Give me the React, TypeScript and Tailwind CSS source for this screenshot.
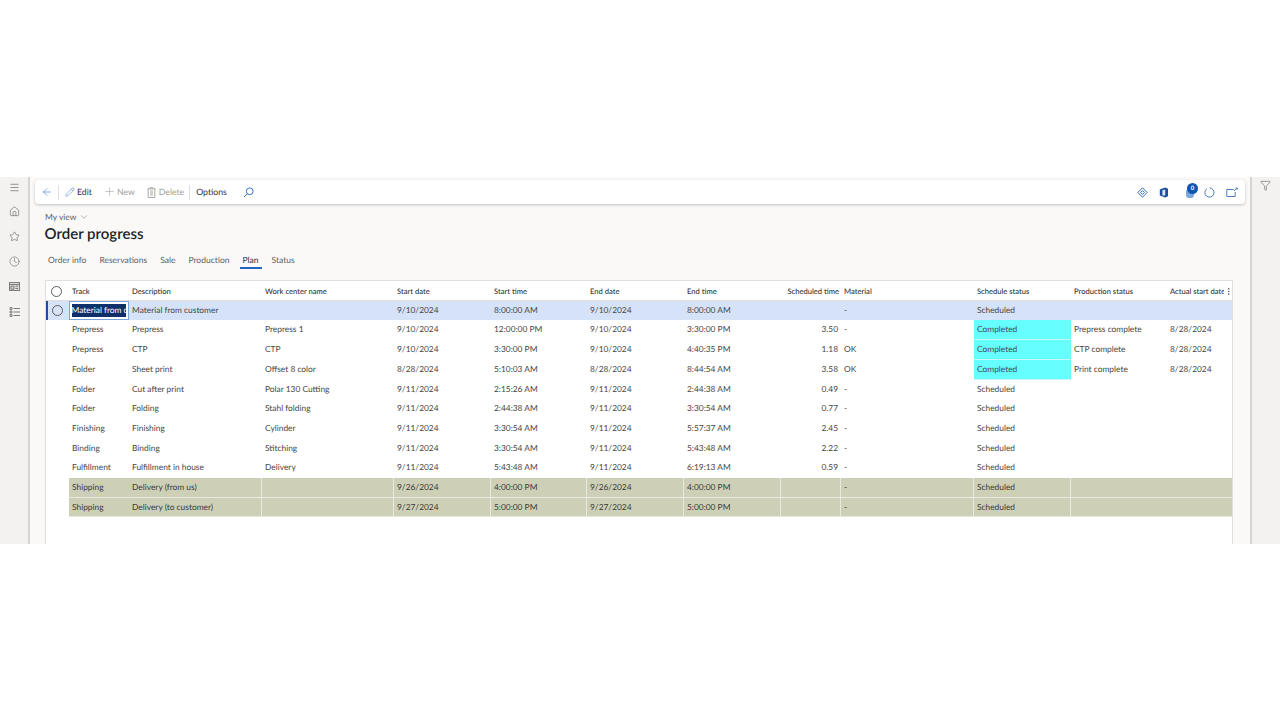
import React from "react";
import { ArrowLeft, Clock, Filter, Home, Menu, Pencil, Plus, Star, EllipsisVertical, ChevronDown } from "lucide-react";

type Row = {
  track: string;
  desc: string;
  center: string;
  startDate: string;
  startTime: string;
  endDate: string;
  endTime: string;
  hours: string;
  material: string;
  status: string;
  production: string;
  actual: string;
};

const rows: Row[] = [
  { track: "Prepress", desc: "Prepress", center: "Prepress 1", startDate: "9/10/2024", startTime: "12:00:00 PM", endDate: "9/10/2024", endTime: "3:30:00 PM", hours: "3.50", material: "-", status: "Completed", production: "Prepress complete", actual: "8/28/2024" },
  { track: "Prepress", desc: "CTP", center: "CTP", startDate: "9/10/2024", startTime: "3:30:00 PM", endDate: "9/10/2024", endTime: "4:40:35 PM", hours: "1.18", material: "OK", status: "Completed", production: "CTP complete", actual: "8/28/2024" },
  { track: "Folder", desc: "Sheet print", center: "Offset 8 color", startDate: "8/28/2024", startTime: "5:10:03 AM", endDate: "8/28/2024", endTime: "8:44:54 AM", hours: "3.58", material: "OK", status: "Completed", production: "Print complete", actual: "8/28/2024" },
  { track: "Folder", desc: "Cut after print", center: "Polar 130 Cutting", startDate: "9/11/2024", startTime: "2:15:26 AM", endDate: "9/11/2024", endTime: "2:44:38 AM", hours: "0.49", material: "-", status: "Scheduled", production: "", actual: "" },
  { track: "Folder", desc: "Folding", center: "Stahl folding", startDate: "9/11/2024", startTime: "2:44:38 AM", endDate: "9/11/2024", endTime: "3:30:54 AM", hours: "0.77", material: "-", status: "Scheduled", production: "", actual: "" },
  { track: "Finishing", desc: "Finishing", center: "Cylinder", startDate: "9/11/2024", startTime: "3:30:54 AM", endDate: "9/11/2024", endTime: "5:57:37 AM", hours: "2.45", material: "-", status: "Scheduled", production: "", actual: "" },
  { track: "Binding", desc: "Binding", center: "Stitching", startDate: "9/11/2024", startTime: "3:30:54 AM", endDate: "9/11/2024", endTime: "5:43:48 AM", hours: "2.22", material: "-", status: "Scheduled", production: "", actual: "" },
  { track: "Fulfillment", desc: "Fulfillment in house", center: "Delivery", startDate: "9/11/2024", startTime: "5:43:48 AM", endDate: "9/11/2024", endTime: "6:19:13 AM", hours: "0.59", material: "-", status: "Scheduled", production: "", actual: "" },
];

const shipping: Row[] = [
  { track: "Shipping", desc: "Delivery (from us)", center: "", startDate: "9/26/2024", startTime: "4:00:00 PM", endDate: "9/26/2024", endTime: "4:00:00 PM", hours: "", material: "-", status: "Scheduled", production: "", actual: "" },
  { track: "Shipping", desc: "Delivery (to customer)", center: "", startDate: "9/27/2024", startTime: "5:00:00 PM", endDate: "9/27/2024", endTime: "5:00:00 PM", hours: "", material: "-", status: "Scheduled", production: "", actual: "" },
];

const gridCols = "grid grid-cols-[23px_60px_133px_132px_97px_96px_97px_97px_60px_133px_97px_96px_65px]";
const cell = "px-[3px] truncate leading-[19.7px]";

const Circle = () => <div className="w-[11px] h-[11px] rounded-full border border-[#605e5c] -ml-[1.5px]" />;

const ShippingRow = ({ r }: { r: Row }) => {
  const values = [r.track, r.desc, r.center, r.startDate, r.startTime, r.endDate, r.endTime, r.hours, r.material, r.status, r.production, r.actual];
  return (
    <div className={`${gridCols} h-[19.7px]`}>
      <div />
      {values.map((v, i) => (
        <div key={i} className={`${cell} bg-[#cdd0b7] text-[#3b3a39] border-b border-[#e9eadf] ${i >= 1 && i <= 9 ? "border-r" : ""}`}>
          {v}
        </div>
      ))}
    </div>
  );
};

export default function App() {
  return (
    <div className="h-[720px] w-[1280px] bg-white overflow-hidden text-[8.4px] text-[#484644] [text-rendering:geometricPrecision] font-['Lato','Open_Sans',sans-serif]">
      <div className="h-[177px]" />
      <div className="flex h-[367px]">
        <aside className="w-[30px] shrink-0 bg-[#f3f2f1] border-r-2 border-[#d6d4d2] flex flex-col items-center pt-[5px] gap-[14px] text-[#605e5c]">
          <Menu size={11} strokeWidth={1.4} className="-mb-[1px]" />
          <Home size={11} strokeWidth={1.3} />
          <Star size={11} strokeWidth={1.3} />
          <Clock size={11} strokeWidth={1.2} />
          <svg width="11" height="11" viewBox="0 0 11 11" fill="none" stroke="#7f7d7b" strokeWidth="1">
            <rect x="0.5" y="1.5" width="10" height="8" fill="#dcdbd9" />
            <path d="M0.5 3.5h10M2 5.2h3v3H2ZM6.5 5.2H9M6.5 7.5H9" />
          </svg>
          <svg width="11" height="11" viewBox="0 0 11 11" fill="none" stroke="#7f7d7b" strokeWidth="1">
            <path d="M1 1.5h2v2H1ZM1 5h2v2H1ZM1 8.5h2v2H1ZM4.5 2.5H11M4.5 6H11M4.5 9.5H11" />
          </svg>
        </aside>

        <main className="w-[1220px] bg-[#faf9f8] shrink-0 flex flex-col pl-[5px] pr-[5px]">
          <div className="mt-[3px] h-[24px] w-[1210px] bg-white rounded-[4px] shadow-[0_1px_3px_rgba(0,0,0,0.22)] flex items-center text-[8.7px] text-[#323130] shrink-0">
            <div className="w-[24px] flex justify-center border-r border-[#e1dfdd] h-[15px] items-center">
              <ArrowLeft size={12} strokeWidth={1.1} className="text-[#2266c2]" />
            </div>
            <div className="flex items-center gap-[2px] ml-[6px]">
              <Pencil size={10} strokeWidth={1.1} className="text-[#2266c2]" />
              <span>Edit</span>
            </div>
            <div className="flex items-center gap-[1px] ml-[11px] text-[#a19f9d]">
              <Plus size={13} strokeWidth={1} />
              <span>New</span>
            </div>
            <div className="flex items-center gap-[3px] ml-[12px] text-[#a19f9d] border-r border-[#e1dfdd] pr-[5px] h-[15px]">
              <svg width="9" height="11" viewBox="0 0 9 11" fill="none" stroke="currentColor" strokeWidth="0.9">
                <path d="M3 1.5V.8h3v.7M.5 1.8h8M1.2 1.8v8.7h6.6V1.8" />
                <path d="M3 4h3M3 6h3M3 8h3" />
              </svg>
              <span>Delete</span>
            </div>
            <span className="ml-[6px]">Options</span>
            <svg width="11" height="11" viewBox="0 0 11 11" fill="none" stroke="#2266c2" strokeWidth="0.9" className="ml-[16px]">
              <circle cx="6.7" cy="4.3" r="3.4" />
              <path d="M4.2 6.8 1 10" />
            </svg>
            <div className="ml-auto flex items-center text-[#1d5fb8] pr-[7px]">
              <svg width="11" height="11" viewBox="0 0 11 11" fill="none" stroke="currentColor" strokeWidth="0.9" className="mr-[11px]">
                <path d="M5.5 0.8 10.2 5.5 5.5 10.2 0.8 5.5Z" />
                <path d="M3.6 5.5 5.5 3.6 7.4 5.5 5.5 7.4Z" />
              </svg>
              <svg width="10" height="11" viewBox="0 0 10 11" fill="none" className="mr-[17px]">
                <path d="M0.8 2.6 6.2 0.6 9 1.8v7.4L6.2 10.4 0.8 8.4Z" fill="#1d4f9c" />
                <path d="M6.2 2.4v6.2H3.4V3.3Z" fill="#dbe6f6" />
              </svg>
              <div className="relative w-[11px] h-[12px] mr-[7px]">
                <div className="absolute left-0 top-[3px] w-[8px] h-[9px] rounded-[3px] bg-[#7ba7dc]" />
                <div className="absolute left-[1px] -top-[3px] w-[11px] h-[11px] rounded-full bg-[#0f55b5] text-white text-[6px] font-bold leading-[11px] text-center">0</div>
              </div>
              <svg width="11" height="11" viewBox="0 0 11 11" fill="none" stroke="#4a7ebb" strokeWidth="1" className="mr-[11px]">
                <path d="M3 1.6A4.6 4.6 0 1 0 5.5 0.9" />
              </svg>
              <svg width="12" height="11" viewBox="0 0 12 11" fill="none" stroke="#4a7ebb" strokeWidth="1">
                <path d="M7.5 2.5H.8v7h8.4V5" />
                <path d="M8 4 11 1.2M9.5 1H11.2V2.7" />
              </svg>
            </div>
          </div>

          <div className="ml-[10px] mt-[7px] flex items-center gap-[2px] text-[8.5px] text-[#605e5c] leading-[12px]">
            My view
            <ChevronDown size={10} strokeWidth={1.1} />
          </div>
          <h1 className="ml-[9.5px] mt-[1px] text-[15px] leading-[20px] font-semibold text-[#201f1e]">Order progress</h1>

          <div className="ml-[13px] mt-[10px] flex gap-[13px] text-[8.5px] text-[#605e5c] h-[19px] items-start leading-[12px]">
            <span>Order info</span>
            <span>Reservations</span>
            <span>Sale</span>
            <span>Production</span>
            <span className="text-[#323130] border-b-2 border-[#2266c2] h-[15px] px-[3px] -mx-[3px]">Plan</span>
            <span>Status</span>
          </div>

          <section className="ml-[10px] mt-[7px] w-[1188px] flex-1 bg-white border border-b-0 border-[#e1dfdd] min-h-0">
            <div className={`${gridCols} h-[19.8px] border-b border-[#e1dfdd] text-[7.6px] text-[#323130] font-medium pt-[1px]`}>
              <div className="flex items-center justify-center"><Circle /></div>
              {["Track", "Description", "Work center name", "Start date", "Start time", "End date", "End time"].map((h) => (
                <div key={h} className="px-[3px] leading-[18px]">{h}</div>
              ))}
              <div className="pr-[2px] text-right leading-[18px] whitespace-nowrap">Scheduled time</div>
              {["Material", "Schedule status", "Production status"].map((h) => (
                <div key={h} className="px-[3px] leading-[18px]">{h}</div>
              ))}
              <div className="pl-[3px] leading-[18px] flex items-center whitespace-nowrap">
                <span className="w-[54px] overflow-hidden shrink-0">Actual start date</span>
                <EllipsisVertical size={9} strokeWidth={1.4} className="shrink-0" />
              </div>
            </div>

            <div className={`${gridCols} h-[19.7px] bg-[#d6e2f8] relative`}>
              <div className="flex items-center justify-center border-l-2 border-[#1d4f9c]"><Circle /></div>
              <div className="border border-[#7ba3dc] bg-white px-[1.5px] flex items-center">
                <span className="block w-[54px] overflow-hidden bg-[#0f2f6b] text-white whitespace-nowrap leading-[13px]">Material from customer</span>
              </div>
              <div className={cell}>Material from customer</div>
              <div className={cell} />
              <div className={cell}>9/10/2024</div>
              <div className={cell}>8:00:00 AM</div>
              <div className={cell}>9/10/2024</div>
              <div className={cell}>8:00:00 AM</div>
              <div className={cell} />
              <div className={cell}>-</div>
              <div className={cell}>Scheduled</div>
              <div className={cell} />
              <div className={cell} />
            </div>

            {rows.map((r, i) => (
              <div key={i} className={`${gridCols} h-[19.7px]`}>
                <div />
                <div className={cell}>{r.track}</div>
                <div className={cell}>{r.desc}</div>
                <div className={cell}>{r.center}</div>
                <div className={cell}>{r.startDate}</div>
                <div className={cell}>{r.startTime}</div>
                <div className={cell}>{r.endDate}</div>
                <div className={cell}>{r.endTime}</div>
                <div className={`${cell} text-right`}>{r.hours}</div>
                <div className={cell}>{r.material}</div>
                <div className={`${cell} ${r.status === "Completed" ? "bg-[#66ffff] border-b border-[#c8f7f7]" : ""}`}>{r.status}</div>
                <div className={cell}>{r.production}</div>
                <div className={cell}>{r.actual}</div>
              </div>
            ))}

            {shipping.map((r, i) => (
              <ShippingRow key={i} r={r} />
            ))}
          </section>
        </main>

        <aside className="flex-1 bg-[#f3f2f1] border-l-2 border-[#d6d4d2] flex justify-center pt-[3px]">
          <Filter size={11} strokeWidth={1.1} className="text-[#484644] -ml-[2px]" />
        </aside>
      </div>
    </div>
  );
}
